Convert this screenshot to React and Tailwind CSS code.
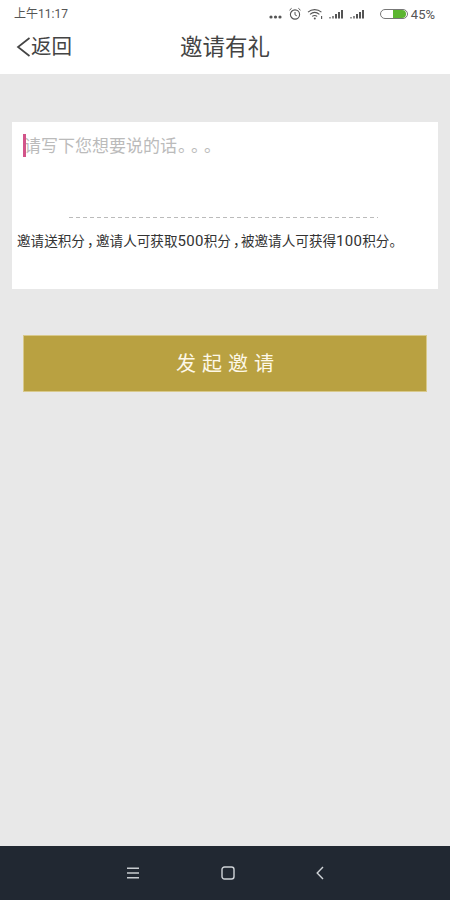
import React from 'react'

const font = "font-['Roboto','Noto_Sans_CJK_SC',sans-serif] [text-spacing-trim:space-all]"

function Signal({ className }) {
  return (
    <svg width="15" height="10" viewBox="0 0 15 10" fill="#555" className={className}>
      <rect x="0" y="8" width="2" height="1.5" opacity="0.6" />
      <rect x="3" y="7" width="2" height="2.5" opacity="0.7" />
      <rect x="6" y="5" width="2" height="4.5" />
      <rect x="9" y="3" width="2" height="6.5" />
      <rect x="12" y="1" width="2" height="8.5" />
    </svg>
  )
}

function StatusIcons() {
  return (
    <div className="flex items-center text-[#555]">
      <svg width="14" height="6" viewBox="0 0 14 6" className="mt-[5px]">
        <circle cx="2" cy="3" r="1.6" fill="#555" />
        <circle cx="6.5" cy="3" r="1.6" fill="#555" />
        <circle cx="11" cy="3" r="1.6" fill="#555" />
      </svg>
      <svg width="14" height="14" viewBox="0 0 14 14" fill="none" stroke="#555" className="ml-[5px]">
        <circle cx="7" cy="7.5" r="4.6" strokeWidth="1.1" />
        <path d="M7 5v2.8l1.8 1M1.5 3.2 3.6 1.3M12.5 3.2l-2.1-1.9" strokeWidth="1" />
      </svg>
      <svg width="16" height="12" viewBox="0 0 16 12" fill="none" stroke="#555" strokeWidth="1.1" className="ml-[5px]">
        <path d="M1 4.2C4.8.8 10.6.8 14.4 4.2M3 6.4c2.8-2.4 6.6-2.4 9.4 0M5.2 8.4c1.6-1.2 3.4-1.2 5 0" />
        <circle cx="7.8" cy="10.4" r="1" fill="#555" stroke="none" />
        <path d="M14.6 8v3" />
      </svg>
      <Signal className="ml-[6px]" />
      <Signal className="ml-[6px]" />
      <div className="ml-[15px] flex h-[10px] w-[28px] items-center justify-end rounded-full border border-[#777] bg-white pr-[1px]">
        <div className="h-[8px] w-[13px] rounded-r-full rounded-l-[1px] bg-[#5cb531]" />
      </div>
      <span className="ml-[3px] text-[13px] leading-none text-[#555]">45%</span>
    </div>
  )
}

export default function App() {
  return (
    <div className={`${font} flex h-[900px] w-[450px] flex-col bg-[#e8e8e8]`}>
      <header className="h-[74px] bg-white">
        <div className="flex h-[28px] items-center justify-between pl-[14px] pr-[15px]">
          <span className="text-[12px] text-[#555]">上午11:17</span>
          <StatusIcons />
        </div>
        <div className="relative flex h-[38px] items-center justify-center">
          <div className="absolute left-[16px] top-0 flex h-full items-center">
            <svg width="15" height="22" viewBox="0 0 15 22" fill="none" stroke="#444" strokeWidth="1.7">
              <path d="M13.5 2 2 11l11.5 9" />
            </svg>
            <span className="text-[20.5px] leading-none text-[#444]">返回</span>
          </div>
          <h1 className="text-[22.5px] font-normal leading-none text-[#444]">邀请有礼</h1>
        </div>
      </header>

      <main className="flex-1 px-[12px] pt-[48px]">
        <section className="h-[167px] bg-white px-[5px]">
          <div className="relative h-[95px] pl-[7px] pt-[13px]">
            <div className="absolute left-[6px] top-[12px] h-[23px] w-[3px] bg-[#d2548a]" />
            <p className="text-[17px] leading-[22px] text-[#bbbbbb]">
              请写下您想要说的话
              <span className="ml-[1px] tracking-[-4px]">。。。</span>
            </p>
          </div>
          <div className="ml-[52px] mr-[55px] h-px bg-[repeating-linear-gradient(90deg,#bbbbbb_0_4px,transparent_4px_7px)]" />
          <p className="mt-[14px] whitespace-nowrap text-[13.6px] leading-[18px] text-[#333]">
            邀请送积分
            <span className="ml-[2px] tracking-[-4.6px]">，</span>
            邀请人可获取<span className="text-[15px] tracking-[0.3px]">500</span>积分
            <span className="ml-[2px] tracking-[-5.6px]">，</span>
            被邀请人可获得<span className="text-[15px] tracking-[0.3px]">100</span>积分。
          </p>
        </section>
        <button className="mx-[11px] mt-[46px] flex h-[57px] w-[404px] items-center justify-center border border-[#d8c98c] bg-[#b9a141] pl-[6px] text-[20px] tracking-[6px] text-[#fdf8e8]">
          发起邀请
        </button>
      </main>

      <nav className="flex h-[54px] items-center justify-center bg-[#212832]">
        <div className="flex w-[198px] items-center justify-between">
          <svg width="14" height="14" viewBox="0 0 14 14" stroke="#c8ccd0" strokeWidth="1.6">
            <path d="M1 2.2h12M1 7h12M1 11.8h12" />
          </svg>
          <svg width="14" height="14" viewBox="0 0 14 14" fill="none" stroke="#d0d4d8" strokeWidth="1.4">
            <rect x="1" y="1" width="12" height="12" rx="2.5" />
          </svg>
          <svg width="8" height="14" viewBox="0 0 8 14" fill="none" stroke="#d0d4d8" strokeWidth="1.4">
            <path d="M7 1 1.2 7 7 13" />
          </svg>
        </div>
      </nav>
    </div>
  )
}
